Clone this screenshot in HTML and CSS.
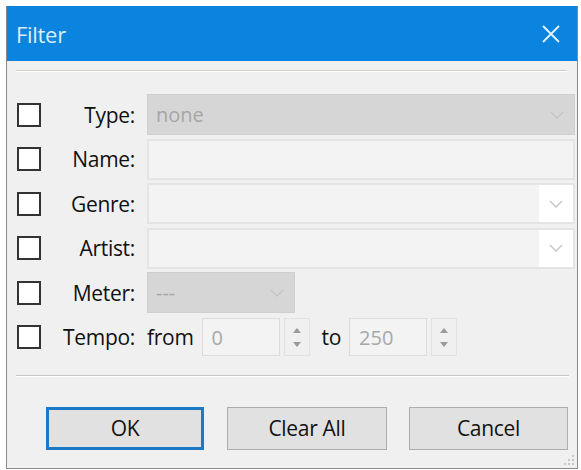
FILE: index.html
```html
<!DOCTYPE html>
<html lang="en">
<head>
    <meta charset="UTF-8">
    <meta name="viewport" content="width=device-width, initial-scale=1.0">
    <title>Filter</title>
    <link rel="stylesheet" href="styles.css">
</head>
<body>
    <div class="window">
        <div class="titlebar">
            <span class="title">Filter</span>
            <svg class="close" width="20" height="20" viewBox="0 0 20 20">
                <path d="M2 2 L18 18 M18 2 L2 18" stroke="#e8f4ff" stroke-width="1.8" fill="none"/>
            </svg>
        </div>

        <div class="content">
            <div class="groove"></div>

            <div class="rows">
                <div class="row">
                    <span class="check"></span>
                    <label class="label">Type:</label>
                    <div class="select disabled wide">
                        <span class="value">none</span>
                        <span class="arrow"><svg width="14" height="8" viewBox="0 0 14 8"><path d="M1 1 L7 7 L13 1" stroke="#c4c4c4" stroke-width="1.3" fill="none"/></svg></span>
                    </div>
                </div>

                <div class="row">
                    <span class="check"></span>
                    <label class="label">Name:</label>
                    <div class="textbox wide"></div>
                </div>

                <div class="row">
                    <span class="check"></span>
                    <label class="label">Genre:</label>
                    <div class="select combo wide">
                        <span class="value"></span>
                        <span class="arrow"><svg width="14" height="8" viewBox="0 0 14 8"><path d="M1 1 L7 7 L13 1" stroke="#c4c4c4" stroke-width="1.3" fill="none"/></svg></span>
                    </div>
                </div>

                <div class="row">
                    <span class="check"></span>
                    <label class="label">Artist:</label>
                    <div class="select combo wide">
                        <span class="value"></span>
                        <span class="arrow"><svg width="14" height="8" viewBox="0 0 14 8"><path d="M1 1 L7 7 L13 1" stroke="#c4c4c4" stroke-width="1.3" fill="none"/></svg></span>
                    </div>
                </div>

                <div class="row">
                    <span class="check"></span>
                    <label class="label">Meter:</label>
                    <div class="select disabled short">
                        <span class="value">---</span>
                        <span class="arrow"><svg width="14" height="8" viewBox="0 0 14 8"><path d="M1 1 L7 7 L13 1" stroke="#c4c4c4" stroke-width="1.3" fill="none"/></svg></span>
                    </div>
                </div>

                <div class="row">
                    <span class="check"></span>
                    <label class="label">Tempo:</label>
                    <div class="tempo">
                        <span class="word">from</span>
                        <div class="spinbox">0</div>
                        <div class="spin">
                            <svg width="8" height="5" viewBox="0 0 8 5"><path d="M0 5 L4 0 L8 5 Z" fill="#9a9a9a"/></svg>
                            <svg width="8" height="5" viewBox="0 0 8 5"><path d="M0 0 L4 5 L8 0 Z" fill="#9a9a9a"/></svg>
                        </div>
                        <span class="word to">to</span>
                        <div class="spinbox">250</div>
                        <div class="spin">
                            <svg width="8" height="5" viewBox="0 0 8 5"><path d="M0 5 L4 0 L8 5 Z" fill="#9a9a9a"/></svg>
                            <svg width="8" height="5" viewBox="0 0 8 5"><path d="M0 0 L4 5 L8 0 Z" fill="#9a9a9a"/></svg>
                        </div>
                    </div>
                </div>
            </div>

            <div class="groove bottom"></div>

            <div class="buttons">
                <button class="default">OK</button>
                <button class="clear">Clear All</button>
                <button>Cancel</button>
            </div>

            <svg class="grip" width="14" height="14" viewBox="0 0 14 14">
                <rect x="10" y="2" width="2" height="2" fill="#c8c8c8"/>
                <rect x="6" y="6" width="2" height="2" fill="#c8c8c8"/>
                <rect x="10" y="6" width="2" height="2" fill="#c8c8c8"/>
                <rect x="2" y="10" width="2" height="2" fill="#c8c8c8"/>
                <rect x="6" y="10" width="2" height="2" fill="#c8c8c8"/>
                <rect x="10" y="10" width="2" height="2" fill="#c8c8c8"/>
            </svg>
        </div>
    </div>
</body>
</html>
```

FILE: styles.css
```css
* {
    margin: 0;
    padding: 0;
    box-sizing: border-box;
}

body {
    font-family: 'Open Sans', 'Noto Sans', sans-serif;
    background: #ffffff;
    color: #111;
    padding: 6px 3px 0 6px;
}

.window {
    width: 572px;
    height: 463px;
    border: 1px solid #8a8a8a;
    border-top: none;
    background: #f0f0f0;
    display: flex;
    flex-direction: column;
}

.titlebar {
    height: 55px;
    background: #0a84de;
    display: flex;
    align-items: center;
    justify-content: space-between;
    padding: 0 16px 0 9px;
}

.title {
    color: #dcedfd;
    font-size: 22px;
    letter-spacing: -0.3px;
}

.content {
    flex: 1;
    position: relative;
    padding: 9px 8px 0 9px;
}

.groove {
    height: 2px;
    border-top: 1px solid #d3cec6;
    border-bottom: 1px solid #ffffff;
    margin-right: 2px;
}

.groove.bottom {
    margin-top: 17px;
    border-top-color: #c6c6c6;
    margin-right: 0;
}

.rows {
    margin-top: 22px;
    display: flex;
    flex-direction: column;
    gap: 3.5px;
}

.row {
    display: grid;
    grid-template-columns: 25px 82px 1fr;
    column-gap: 12px;
    align-items: center;
    height: 41px;
}

.check {
    width: 24px;
    height: 24px;
    border: 2px solid #333;
    background: #fff;
    margin-left: 1px;
}

.label {
    text-align: right;
    font-size: 21px;
    letter-spacing: -0.3px;
    color: #111;
    white-space: nowrap;
}

.select,
.textbox {
    height: 41px;
    display: flex;
    align-items: center;
    font-size: 20px;
}

.select.wide,
.textbox.wide {
    width: 428px;
}

.select.short {
    width: 148px;
}

.select.disabled {
    background: #d6d6d6;
    border: 1px solid #cfcfcf;
    color: #a6a6a6;
}

.select.combo,
.textbox {
    background: #f3f3f3;
    border: 2px solid #e4e4e4;
}

.value {
    flex: 1;
    padding-left: 8px;
}

.arrow {
    width: 34px;
    align-self: stretch;
    display: flex;
    align-items: center;
    justify-content: center;
}

.select.combo .arrow {
    background: #ffffff;
}

.tempo {
    display: flex;
    align-items: center;
    height: 41px;
}

.word {
    font-size: 21px;
    letter-spacing: -0.3px;
    color: #111;
}

.word.to {
    margin-left: 12px;
}

.spinbox {
    width: 78px;
    height: 38px;
    margin-left: 8px;
    background: #f3f3f3;
    border: 1px solid #dcdcdc;
    color: #a8a8a8;
    font-size: 20px;
    padding-left: 9px;
    display: flex;
    align-items: center;
}

.spinbox + .spin {
    margin-left: 4px;
}

.spin {
    width: 26px;
    height: 38px;
    border: 1px solid #e2e2e2;
    display: flex;
    flex-direction: column;
    align-items: center;
    justify-content: center;
    gap: 9px;
}

.buttons {
    display: flex;
    gap: 22px;
    margin-top: 30px;
    padding-left: 30px;
}

button {
    width: 159px;
    height: 43px;
    background: #e1e1e1;
    border: 1px solid #adadad;
    font-family: inherit;
    font-size: 21px;
    letter-spacing: -0.3px;
    color: #111;
}

button.default {
    width: 158px;
    margin-right: 1px;
    border: 3px solid #1b79c8;
}

button.clear {
    width: 160px;
}

.grip {
    position: absolute;
    right: 1px;
    bottom: 1px;
}
```
